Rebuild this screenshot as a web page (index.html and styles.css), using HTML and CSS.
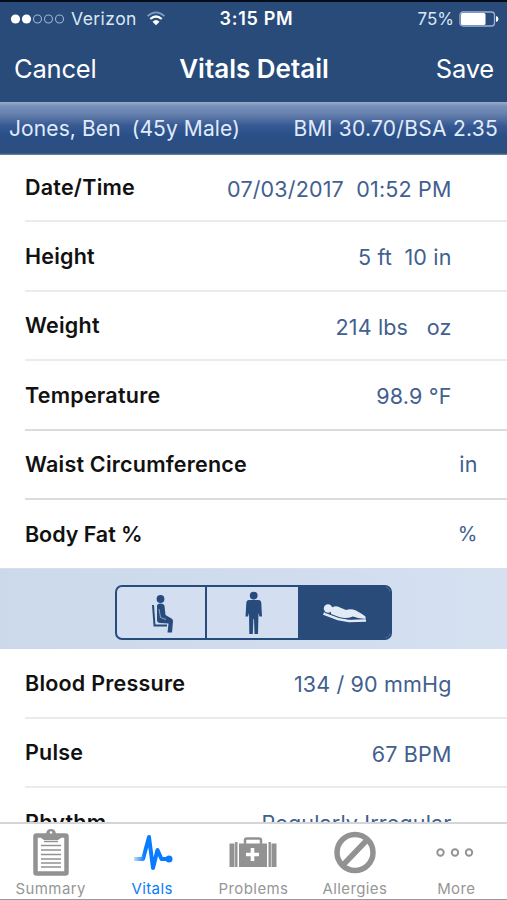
FILE: index.html
```html
<!DOCTYPE html>
<html lang="en">
<head>
<meta charset="utf-8">
<title>Vitals Detail</title>
<link rel="stylesheet" href="styles.css">
</head>
<body>
<div class="phone">
  <header class="top">
    <div class="status">
      <div class="carrier">
        <svg width="56" height="12" viewBox="0 0 56 12"><g fill="#fff"><circle cx="5.500" cy="6" r="4.600"/><circle cx="16.500" cy="6" r="4.600"/></g><g fill="none" stroke="#9db3d3" stroke-width="1.100"><circle cx="27.500" cy="6" r="4"/><circle cx="38.500" cy="6" r="4"/><circle cx="49.500" cy="6" r="4"/></g></svg>
        <span class="t-carrier">Verizon</span>
        <svg class="wifi" width="20" height="15" viewBox="0 0 20 15" fill="none"><path d="M1.500 5.200Q10-2.500 18.500 5.200" stroke="#7f9ac0" stroke-width="1.800"/><path d="M4.300 8Q10 3 15.700 8" stroke="#fff" stroke-width="2.200"/><path d="M6.500 10.700Q10 7.400 13.500 10.700L10 14.300Z" fill="#fff"/></svg>
      </div>
      <span class="clock">3:15 PM</span>
      <div class="power"><span class="t-power">75%</span>
        <svg width="40" height="16" viewBox="0 0 40 16"><rect x="1" y="1" width="34.500" height="14" rx="3" fill="none" stroke="#9db3d3" stroke-width="1.300"/><rect x="2" y="2" width="24.500" height="12" rx="1.500" fill="#fff"/><path d="M37 5Q39.500 5.500 39.500 8T37 11Z" fill="#fff"/></svg>
      </div>
    </div>
    <nav class="nav"><span class="cancel">Cancel</span><h1>Vitals Detail</h1><span class="save">Save</span></nav>
  </header>
  <div class="patient"><span class="p-name">Jones, Ben</span><span class="p-age">(45y Male)</span><span class="p-bmi">BMI 30.70/BSA 2.35</span></div>
  <main class="content">
    <section class="list first">
      <div class="row"><b>Date/Time</b><span>07/03/2017&nbsp; 01:52 PM</span></div>
      <div class="row"><b>Height</b><span>5 ft&nbsp; 10 in</span></div>
      <div class="row"><b>Weight</b><span>214 lbs&nbsp;&nbsp; oz</span></div>
      <div class="row dark"><b>Temperature</b><span>98.9 °F</span></div>
      <div class="row dark wide"><b>Waist Circumference</b><span>in</span></div>
      <div class="row last wide"><b>Body Fat %</b><span class="pct">%</span></div>
    </section>
    <section class="position">
      <div class="segments">
        <div class="seg">
          <svg width="26" height="40" viewBox="-1 -1 26 40"><circle cx="11.500" cy="5" r="3.900" fill="#284b7e"/><path d="M8 12Q8 9.500 11.500 9.500T15.500 12L16.500 21L22.500 24.500Q24.300 25.500 24 27.500L23 38.500H18.500L19.500 29.500L11 29Q8 28.500 8 26Z" fill="#284b7e"/><path d="M4 11L5.500 31.500H18" fill="none" stroke="#284b7e" stroke-width="2"/><path d="M10 15L11.500 23.500L17 25.500" fill="none" stroke="#b7c8df" stroke-width=".7"/></svg>
        </div>
        <div class="seg">
          <svg width="22" height="44" viewBox="-1 0 22 44" fill="#284b7e"><circle cx="10.700" cy="4.600" r="3.900"/><path d="M6 9H15.500Q18 9 18.300 12L19 25.500H16.500L15.500 22L15 43H11.500L11 28H10.400L9.800 43H6.300L6 22L5 25.500H2.500L3.300 12Q3.600 9 6 9Z"/></svg>
        </div>
        <div class="seg on">
          <svg width="46" height="20" viewBox="0 0 46 20"><circle cx="6" cy="5.500" r="4.200" fill="#e1eaf5"/><path d="M9 5Q13 2 18 4.500L24 7Q29 5.500 34 7.500L40 11L43.500 13.500V16L36 15L31 13.500Q25 16 18 14.500L9 11Z" fill="#e1eaf5"/><path d="M1.500 10.500L16 16L27 18L44 17.500" fill="none" stroke="#e1eaf5" stroke-width="2.600"/><path d="M3 9.500L17 14.500L27 16.200L36 15.500" fill="none" stroke="#284b7e" stroke-width=".6"/></svg>
        </div>
      </div>
    </section>
    <section class="list second">
      <div class="row"><b>Blood Pressure</b><span>134 / 90 mmHg</span></div>
      <div class="row"><b>Pulse</b><span>67 BPM</span></div>
      <div class="row"><b>Rhythm</b><span>Regularly Irregular</span></div>
    </section>
  </main>
  <footer class="tabs">
    <div class="tab"><svg width="38" height="50" viewBox="0 0 38 50"><rect x="3.500" y="7.500" width="31" height="38" rx="1" fill="#fff" stroke="#929292" stroke-width="4.500"/><path d="M9 10V6H14Q14.500 1 19 1T24 6H29V10L26 12H12Z" fill="#929292"/><circle cx="19" cy="4.500" r="1.300" fill="#fff"/><path d="M12 13.500H26M9 17.500H29M9 22H29M9 26.500H29M9 31H29M9 35H29M9 39H29" stroke="#929292" stroke-width="1.400"/></svg><span>Summary</span></div>
    <div class="tab active"><svg width="42" height="50" viewBox="-1 0 42 50"><defs><linearGradient id="fade"><stop stop-color="#087bff" stop-opacity=".25"/><stop offset=".3" stop-color="#087bff"/></linearGradient></defs><path d="M2 31H11L17 9L21 40L25.500 22L29.500 31H37" fill="none" stroke="url(#fade)" stroke-width="4" stroke-linejoin="round"/><circle cx="37" cy="31" r="3.500" fill="#087bff"/></svg><span>Vitals</span></div>
    <div class="tab"><svg width="48" height="50" viewBox="0 0 48 50" fill="#929292"><path d="M.5 15.500H5.500V39H.5ZM42.500 15.500H47.500V39H42.500ZM10 15.500H38V39H10Z"/><path d="M7.300 14V39M40.700 14V39" stroke="#929292" stroke-width="2.400"/><path d="M16 16V12Q16 10.500 18 10.500H30Q32 10.500 32 12V16" fill="none" stroke="#929292" stroke-width="2.500"/><path d="M23.500 20V33M17 26.500H30" stroke="#fff" stroke-width="3.600"/></svg><span>Problems</span></div>
    <div class="tab"><svg width="44" height="50" viewBox="0 0 44 50"><circle cx="22" cy="24.500" r="18" fill="none" stroke="#929292" stroke-width="5.500"/><path d="M34 12L10 37" stroke="#929292" stroke-width="5.500"/></svg><span>Allergies</span></div>
    <div class="tab"><svg width="44" height="50" viewBox="0 0 44 50" fill="none" stroke="#929292" stroke-width="1.900"><circle cx="6.500" cy="24.500" r="3.200"/><circle cx="21" cy="24.500" r="3.200"/><circle cx="35" cy="24.500" r="3.200"/></svg><span>More</span></div>
  </footer>
</div>
</body>
</html>
```
FILE: styles.css
```css
* { box-sizing: border-box; }
body { margin: 0; font-family: Inter, "Liberation Sans", sans-serif; background: #fff; }
svg { display: block; flex: none; }
.phone { width: 507px; height: 900px; display: flex; flex-direction: column; overflow: hidden; border-bottom: 1px solid #999; }
.top { height: 102px; background: #284b7a; border-top: 2px solid #050b18; color: #fff; }
.status { height: 33px; display: grid; grid-template-columns: 1fr auto 1fr; align-items: center; padding: 0 8px 0 10px; font-size: 17px; color: #dce6f5; }
.carrier { display: flex; align-items: center; }
.t-carrier { margin-left: 5px; letter-spacing: .45px; font-size: 17.500px; }
.wifi { margin-left: 9px; }
.clock { font-weight: 600; font-size: 18px; color: #fff; letter-spacing: .7px; padding-left: 4px; }
.power { display: flex; align-items: center; justify-content: flex-end; gap: 5px; }
.nav { height: 67px; display: grid; grid-template-columns: 1fr auto 1fr; align-items: center; padding: 0 13px 0 14px; font-size: 25.500px; }
.nav h1 { margin: 0; font-size: 26px; font-weight: 600; }
.cancel, .save { letter-spacing: -.2px; }
.save { text-align: right; }
.patient { height: 53px; display: flex; align-items: center; padding: 0 9px; font-size: 21px; letter-spacing: .1px; color: #e1ebfa; background: linear-gradient(#99abc9 0, #7890b9 4px, #6680ae 12px, #365892 24px, #294f87 34px, #2d4e7d 51px, #7188ab 53px); white-space: pre; }
.p-age { margin-left: 11px; }
.p-bmi { margin-left: auto; letter-spacing: .27px; }
.content { height: 667px; overflow: hidden; }
.row { height: 69.500px; margin-left: 25px; padding-right: 55.500px; display: flex; justify-content: space-between; align-items: center; border-bottom: 2px solid #ebebeb; font-size: 21.500px; white-space: nowrap; }
.first .row:first-child { height: 67px; padding-bottom: 1px; }
.row.dark { border-bottom-color: #dcdcdc; }
.row b { font-weight: 600; color: #111; letter-spacing: .22px; }
.row span { color: #41608f; padding-top: 3px; letter-spacing: .16px; }
.row.wide { padding-right: 29.500px; }
.row.wide span { padding-top: 0; }
.row.last b { letter-spacing: -.05px; }
.row .pct { font-size: 20px; }
.row.last { height: 68px; border-bottom: 0; }
.position { height: 81px; padding-top: 16px; background: linear-gradient(90deg, #cbd9ea, #d5e0f1); border-top: 1px solid #d8dfe8; }
.segments { width: 277px; height: 55px; margin-left: 115px; border: 2px solid #284b7e; border-radius: 7px; display: grid; grid-template-columns: 90px 93px 1fr; overflow: hidden; background: #d3dff0; }
.seg { display: flex; align-items: center; justify-content: center; border-right: 2px solid #284b7e; }
.seg.on { background: #284b7a; border: 0; }
.tabs { height: 77px; display: grid; grid-template-columns: repeat(5, 1fr); border-top: 2px solid #d5d5d5; background: #fff; }
.tab { display: flex; flex-direction: column; align-items: center; padding-top: 4px; color: #969696; font-size: 15px; line-height: 20px; letter-spacing: .4px; }
.tab span { margin-top: 1px; }
.active { color: #087bff; }
```
